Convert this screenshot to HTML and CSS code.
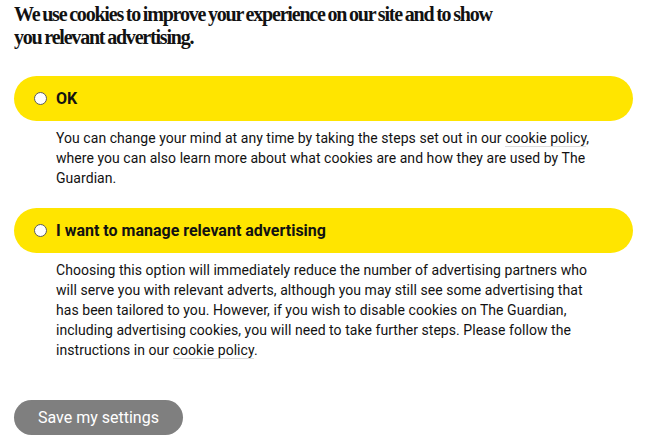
FILE: index.html
```html
<!DOCTYPE html>
<html lang="en">
<head>
    <meta charset="UTF-8">
    <meta name="viewport" content="width=device-width, initial-scale=1.0">
    <title>Cookie consent</title>
    <link rel="stylesheet" href="styles.css">
</head>
<body>
    <div class="banner">
        <h1 class="banner-title">We use cookies to improve your experience on our site and to show you relevant advertising.</h1>

        <form class="options">
            <div class="option">
                <label class="option-pill">
                    <input type="radio" name="consent" class="option-radio">
                    <span>OK</span>
                </label>
                <p class="option-text">You can change your mind at any time by taking the steps set out in our <a href="#">cookie policy</a>, where you can also learn more about what cookies are and how they are used by The Guardian.</p>
            </div>

            <div class="option">
                <label class="option-pill">
                    <input type="radio" name="consent" class="option-radio">
                    <span>I want to manage relevant advertising</span>
                </label>
                <p class="option-text">Choosing this option will immediately reduce the number of advertising partners who will serve you with relevant adverts, although you may still see some advertising that has been tailored to you. However, if you wish to disable cookies on The Guardian, including advertising cookies, you will need to take further steps. Please follow the instructions in our <a href="#">cookie policy</a>.</p>
            </div>

            <button type="button" class="save-btn">Save my settings</button>
        </form>
    </div>
</body>
</html>
```

FILE: styles.css
```css
body {
    margin: 0;
    font-family: Roboto, 'Liberation Sans', sans-serif;
    color: #121212;
    background: #fff;
}

.banner {
    width: 619px;
    padding: 3px 0 0 14px;
}

.banner-title {
    font-family: 'Liberation Serif', serif;
    font-weight: 700;
    font-size: 20px;
    line-height: 22.5px;
    letter-spacing: -1.2px;
    word-spacing: -1px;
    max-width: 495px;
    margin: 0 0 28px;
}

.option-pill {
    display: flex;
    align-items: center;
    gap: 9px;
    height: 45px;
    padding: 0 20px;
    box-sizing: border-box;
    background: #ffe500;
    border-radius: 23px;
    font-weight: 700;
    font-size: 16px;
    cursor: pointer;
}

.option-radio {
    appearance: none;
    width: 13px;
    height: 13px;
    margin: 0;
    border: 1px solid #5c5c5c;
    border-radius: 50%;
    background: #fff;
}

.option-text {
    margin: 7px 0 20px;
    padding: 0 32px 0 42px;
    font-size: 14px;
    line-height: 20px;
    letter-spacing: 0.05px;
}

.option-text a {
    color: inherit;
    text-decoration: none;
    border-bottom: 1px solid #dcdcdc;
}

.save-btn {
    display: block;
    margin-top: 40px;
    height: 35px;
    padding: 0 24px;
    border: none;
    border-radius: 18px;
    background: #7f7f7f;
    color: #fff;
    font-family: inherit;
    font-size: 16px;
    cursor: pointer;
}
```
